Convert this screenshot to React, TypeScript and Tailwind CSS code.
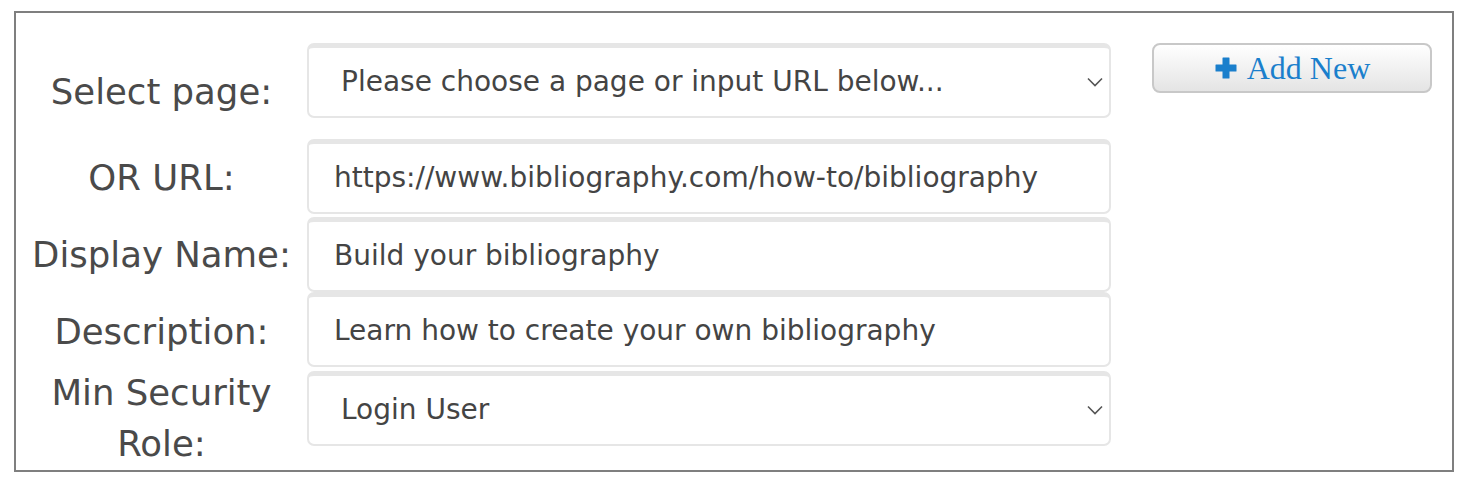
import React from 'react';

const labelCls = "w-[291px] shrink-0 text-center text-[35.5px] leading-[51px] text-[#4a4a4a]";
const fieldCls = "w-[804px] h-[75px] shrink-0 rounded-[7px] border-2 border-[#e6e6e6] border-t-[5px] bg-white flex items-center text-[28px] text-[#444]";

const Chevron = () => (
  <svg className="w-[16px] h-[10px] text-[#555]" viewBox="0 0 16 10" fill="none">
    <path d="M1 1.5l7 7 7-7" stroke="currentColor" strokeWidth="1.6" />
  </svg>
);

const App = () => {
  return (
    <div className="w-[1470px] h-[488px] bg-white pt-[11px] pl-[14px]" style={{ fontFamily: '"DejaVu Sans", "Open Sans", sans-serif' }}>
      <div className="w-[1440px] h-[461px] border-2 border-[#7f7f7f] flex gap-[41px] pt-[30px]">
        <div className="flex flex-col">
          {/* row 1 */}
          <div className="flex items-start h-[96px]">
            <div className={`${labelCls} self-center mt-[1px]`}>Select page:</div>
            <div className={`${fieldCls} justify-between pl-[32px] pr-[6px]`}>
              <span>Please choose a page or input URL below...</span>
              <Chevron />
            </div>
          </div>
          {/* row 2 */}
          <div className="flex items-start h-[77px]">
            <div className={`${labelCls} self-center`}>OR URL:</div>
            <div className={`${fieldCls} pl-[25px]`}>https://www.bibliography.com/how-to/bibliography</div>
          </div>
          {/* row 3 */}
          <div className="flex items-start h-[76px]">
            <div className={`${labelCls} self-center`}>Display Name:</div>
            <div className={`${fieldCls} pl-[25px] h-[74px] mt-[1px]`}>Build your bibliography</div>
          </div>
          {/* row 4 */}
          <div className="flex items-start h-[78px]">
            <div className={`${labelCls} self-center`}>Description:</div>
            <div className={`${fieldCls} pl-[25px]`}>Learn how to create your own bibliography</div>
          </div>
          {/* row 5 */}
          <div className="flex items-start">
            <div className={`${labelCls} -mt-[3px]`}>Min Security<br />Role:</div>
            <div className={`${fieldCls} justify-between pl-[32px] pr-[6px] mt-[1px]`}>
              <span>Login User</span>
              <Chevron />
            </div>
          </div>
        </div>
        <div>
          <button className="w-[280px] h-[50px] rounded-[8px] border-2 border-[#c8c8c8] bg-gradient-to-b from-white to-[#e4e4e4] flex items-center justify-center gap-[9px] text-[#1a7fcc]">
            <svg className="w-[24px] h-[24px]" viewBox="0 0 24 24">
              <path d="M9 1.5h6a0.5 0.5 0 0 1 .5.5v6.5H22a0.5 0.5 0 0 1 .5.5v6a0.5 0.5 0 0 1-.5.5h-6.5V22a0.5 0.5 0 0 1-.5.5H9a0.5 0.5 0 0 1-.5-.5v-6.5H2a0.5 0.5 0 0 1-.5-.5V9a0.5 0.5 0 0 1 .5-.5h6.5V2a0.5 0.5 0 0 1 .5-.5z" fill="currentColor" />
            </svg>
            <span className="text-[32px] leading-none" style={{ fontFamily: '"Liberation Serif", serif' }}>Add New</span>
          </button>
        </div>
      </div>
    </div>
  );
};

export default App;
